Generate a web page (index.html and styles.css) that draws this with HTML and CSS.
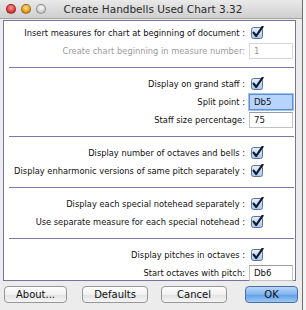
FILE: index.html
```html
<!DOCTYPE html>
<html lang="en">

  <head>
    <meta charset="UTF-8">
    <title>Create Handbells Used Chart 3.32</title>
    <link rel="stylesheet" href="styles.css">
  </head>

  <body>
    <div class="window">
      <div class="titlebar">
        <div class="lights">
          <span class="light red"></span>
          <span class="light orange"></span>
          <span class="light gray"></span>
        </div>
        <div class="title">Create Handbells Used Chart 3.32</div>
      </div>

      <div class="panel">
        <div class="group">
          <div class="row">
            <span class="label">Insert measures for chart at beginning of document :</span>
            <span class="ctl"><span class="check"></span></span>
          </div>
          <div class="row">
            <span class="label dim">Create chart beginning in measure number:</span>
            <span class="ctl"><span class="field disabled">1</span></span>
          </div>
        </div>

        <div class="sep"></div>

        <div class="group">
          <div class="row">
            <span class="label">Display on grand staff :</span>
            <span class="ctl"><span class="check"></span></span>
          </div>
          <div class="row">
            <span class="label">Split point :</span>
            <span class="ctl"><span class="field focus">Db5</span></span>
          </div>
          <div class="row">
            <span class="label">Staff size percentage:</span>
            <span class="ctl"><span class="field">75</span></span>
          </div>
        </div>

        <div class="sep"></div>

        <div class="group">
          <div class="row">
            <span class="label">Display number of octaves and bells :</span>
            <span class="ctl"><span class="check"></span></span>
          </div>
          <div class="row">
            <span class="label">Display enharmonic versions of same pitch separately :</span>
            <span class="ctl"><span class="check"></span></span>
          </div>
        </div>

        <div class="sep"></div>

        <div class="group">
          <div class="row">
            <span class="label">Display each special notehead separately :</span>
            <span class="ctl"><span class="check"></span></span>
          </div>
          <div class="row">
            <span class="label">Use separate measure for each special notehead :</span>
            <span class="ctl"><span class="check"></span></span>
          </div>
        </div>

        <div class="sep"></div>

        <div class="group">
          <div class="row">
            <span class="label">Display pitches in octaves :</span>
            <span class="ctl"><span class="check"></span></span>
          </div>
          <div class="row">
            <span class="label">Start octaves with pitch:</span>
            <span class="ctl"><span class="field">Db6</span></span>
          </div>
        </div>
      </div>

      <div class="buttons">
        <button class="btn about">About...</button>
        <button class="btn defaults">Defaults</button>
        <button class="btn cancel">Cancel</button>
        <button class="btn ok">OK</button>
      </div>
    </div>

    <!-- one checkmark, reused by every .check box -->
    <svg class="defs" width="0" height="0">
      <defs>
        <linearGradient id="boxfill" x1="0" y1="0" x2="0" y2="1">
          <stop offset="0" stop-color="#e6f0fb" />
          <stop offset="1" stop-color="#a9c6ea" />
        </linearGradient>
      </defs>
    </svg>

    <script>
      const mark = '<svg viewBox="0 0 13 13" width="13" height="13">' +
        '<rect x="0.5" y="1.5" width="11" height="11" rx="2" fill="url(#boxfill)" stroke="#5d7598" />' +
        '<path d="M2.6 6.6 L5.2 10 L11.6 0.6" fill="none" stroke="#0e1a2e" stroke-width="2.2" stroke-linecap="round" stroke-linejoin="round" />' +
        '</svg>';
      document.querySelectorAll('.check').forEach(function (c) {
        c.innerHTML = mark;
      });
    </script>
  </body>

</html>
```

FILE: styles.css
```css
* {
  box-sizing: border-box;
  font-family: 'DejaVu Sans', 'Liberation Sans', sans-serif;
}

body {
  margin: 0;
  background: #f4f4f4;
  overflow: hidden;
}

.window {
  width: 303px;
  height: 310px;
  background: #ececec;
  border-right: 1px solid #6e6e6e;
  display: flex;
  flex-direction: column;
}

.titlebar {
  height: 19px;
  background: linear-gradient(#e9e9e9, #cfcfcf);
  border-bottom: 1px solid #a5a5a5;
  display: flex;
  align-items: center;
  position: relative;
}

.lights {
  display: flex;
  gap: 5px;
  padding-left: 6px;
}

.light {
  width: 10px;
  height: 10px;
  border-radius: 50%;
  border: 1px solid rgba(0, 0, 0, 0.3);
}

.red {
  background: radial-gradient(circle at 50% 35%, #ff9c9c 0, #e0443e 55%, #a31c18 100%);
}

.orange {
  background: radial-gradient(circle at 50% 35%, #ffe39a 0, #e8a524 55%, #a8650c 100%);
}

.gray {
  background: radial-gradient(circle at 50% 35%, #fafafa 0, #d0d0d0 60%, #a8a8a8 100%);
}

.title {
  position: absolute;
  left: 0;
  right: 0;
  text-align: center;
  font-size: 10.5px;
  color: #2a2a2a;
  padding-left: 4px;
}

.panel {
  margin: 1px 6px 0 3px;
  height: 261px;
  background: #fff;
  border: 1px solid #76739c;
  padding: 3px 0 0 0;
}

.group {
  display: flex;
  flex-direction: column;
}

.row {
  height: 18px;
  display: flex;
  align-items: center;
  justify-content: flex-end;
}

.label {
  font-size: 8.3px;
  color: #111;
  padding-right: 4px;
  white-space: nowrap;
}

.label.dim {
  color: #9a9a9a;
}

.ctl {
  width: 46px;
  display: flex;
  align-items: center;
}

.check {
  width: 13px;
  height: 13px;
  display: block;
  margin-left: 2px;
  margin-top: -2px;
}

.check svg {
  display: block;
}

.field {
  width: 44px;
  height: 16px;
  border: 1px solid #c2c2c2;
  border-top-color: #9c9c9c;
  font-size: 8.6px;
  color: #111;
  padding: 2px 0 0 4px;
  background: #fff;
}

.field.disabled {
  color: #9a9a9a;
  border-color: #d8d8d8;
}

.field.focus {
  background: #b7d5fc;
  border: 1px solid #5f8fd0;
  box-shadow: 0 0 0 1px #9dc1ee;
}

.sep {
  height: 1px;
  background: #7c79a6;
  margin: 7px 1px 7px 5px;
}

.buttons {
  display: flex;
  align-items: center;
  padding: 5px 0 0 4px;
}

.btn {
  height: 17px;
  border: 1px solid #969696;
  border-radius: 4px;
  background: linear-gradient(#ffffff, #f0f0f0 50%, #e2e2e2 51%, #f4f4f4);
  font-size: 10px;
  color: #111;
  padding: 0;
}

.about {
  width: 63px;
}

.defaults {
  width: 66px;
  margin-left: 15px;
}

.cancel {
  width: 66px;
  margin-left: 13px;
}

.ok {
  width: 53px;
  margin-left: 18px;
  border-color: #4a6fa6;
  background: linear-gradient(#b8d8fb, #7fb3ee 50%, #5d9de6 51%, #9cc8f6);
}

.defs {
  position: absolute;
}
```
